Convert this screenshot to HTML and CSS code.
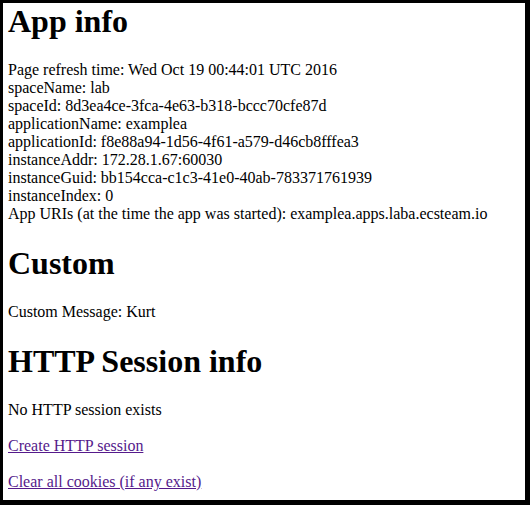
FILE: index.html
```html
<!DOCTYPE html>
<html>
<head>
<meta charset="utf-8">
<title>App info</title>
<link rel="stylesheet" href="styles.css">
</head>
<body>
<div class="frame">
<h1 class="first">App info</h1>
<div class="info">
Page refresh time: Wed Oct 19 00:44:01 UTC 2016<br>
spaceName: lab<br>
spaceId: 8d3ea4ce-3fca-4e63-b318-bccc70cfe87d<br>
applicationName: examplea<br>
applicationId: f8e88a94-1d56-4f61-a579-d46cb8fffea3<br>
instanceAddr: 172.28.1.67:60030<br>
instanceGuid: bb154cca-c1c3-41e0-40ab-783371761939<br>
instanceIndex: 0<br>
App URIs (at the time the app was started): examplea.apps.laba.ecsteam.io
</div>
<h1>Custom</h1>
<div>Custom Message: Kurt</div>
<h1>HTTP Session info</h1>
<div>No HTTP session exists</div>
<p class="link"><a href="#create">Create HTTP session</a></p>
<p class="link"><a href="#clear">Clear all cookies (if any exist)</a></p>
</div>
</body>
</html>
```
FILE: styles.css
```css
html, body {
  margin: 0;
  padding: 0;
  background: #000;
}
.frame {
  box-sizing: border-box;
  width: 530px;
  height: 505px;
  overflow: hidden;
  background: #fff;
  border-style: solid;
  border-color: #000;
  border-width: 3px 5px 5px 3px;
  padding: 0 5px;
  font-family: "Liberation Serif", "Times New Roman", serif;
  font-size: 16px;
  color: #000;
}
h1 {
  font-size: 32px;
  font-weight: bold;
  margin: 21.44px 0;
}
h1.first {
  margin-top: 0;
}
p {
  margin: 16px 0;
}
p.link {
  margin: 17.8px 0;
}
a {
  color: #551a8b;
}
```
